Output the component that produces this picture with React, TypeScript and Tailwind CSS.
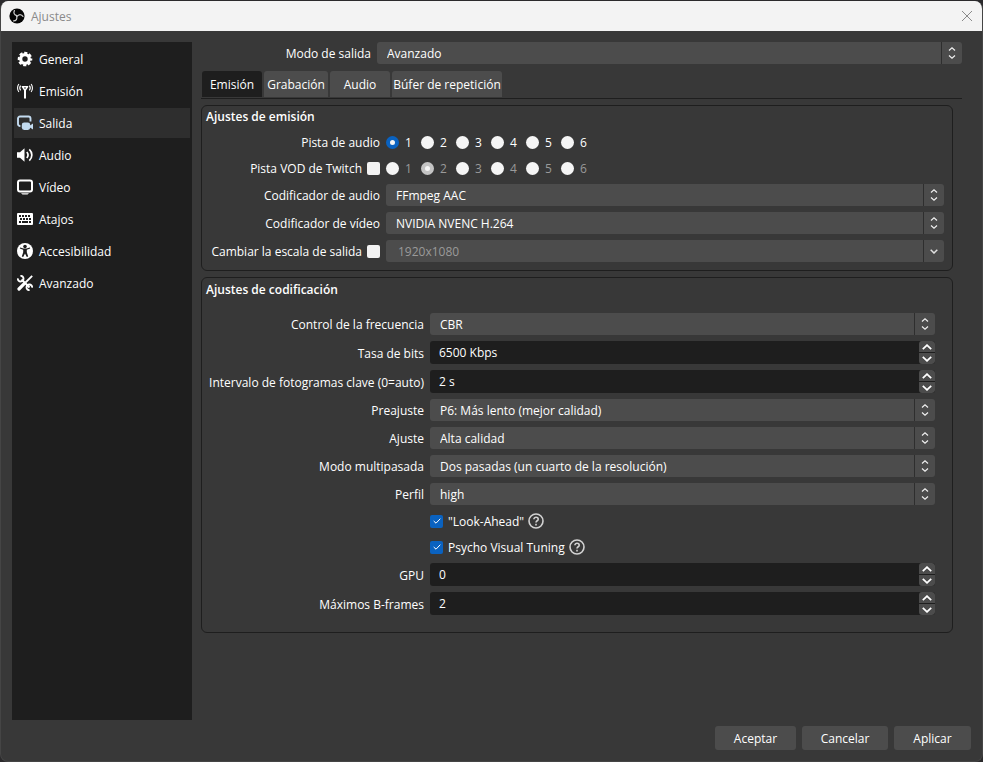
import React from 'react';

interface SelectProps {
  id: string;
  value: string;
  disabled?: boolean;
  ariaLabel?: string;
}

interface SpinProps {
  id: string;
  value: string;
}

interface RowProps {
  id: string;
  label: string;
  children: React.ReactNode;
}

interface RadioGroupProps {
  name: string;
  label: string;
  selected: number;
  disabled?: boolean;
}

const GearIcon = () => (
  <svg viewBox="0 0 16 16" className="size-4" fill="none" stroke="white">
    <circle cx="8" cy="8" r="4.3" strokeWidth="3.2" />
    <circle cx="8" cy="8" r="6.2" strokeWidth="2.2" strokeDasharray="3.1 1.77" strokeDashoffset="1.55" />
  </svg>
);

const AntennaIcon = () => (
  <svg viewBox="0 0 16 16" className="size-4" fill="none" stroke="white">
    <path d="M5.4 3.7h5.200L8 7.500z" strokeWidth="1.500" strokeLinejoin="round" />
    <path d="M8 7v8.500" strokeWidth="2" />
    <path d="M1.900 1C.1 3.200.1 6.800 1.900 9M14.100 1c1.800 2.200 1.800 5.800 0 8" strokeWidth="1.100" />
    <path d="M3.600 2.600c-1.100 1.500-1.100 3.300 0 4.800M12.400 2.600c1.100 1.500 1.100 3.300 0 4.800" strokeWidth="1.100" />
  </svg>
);

const OutputIcon = () => (
  <svg viewBox="0 0 16 16" className="size-4">
    <path d="M3.400 11H3a2 2 0 0 1-2-2V3.500a2 2 0 0 1 2-2h8.500a2 2 0 0 1 2 2v3" fill="none" stroke="#c3dbf0" strokeWidth="1.900" />
    <rect x="4.800" y="7.500" width="8.400" height="7.500" rx="2.400" fill="#c3dbf0" />
    <path d="M12.500 10.800L16 8.600v5.800l-3.500-2.200z" fill="#c3dbf0" />
  </svg>
);

const SpeakerIcon = () => (
  <svg viewBox="0 0 16 16" className="size-4">
    <path d="M0 5.200h3L7.500 1.200v13.600L3 10.800H0z" fill="white" />
    <path d="M9.800 5c1.500 1.800 1.500 4.200 0 6M12.300 2.300c3.400 3.200 3.400 8.200 0 11.400" fill="none" stroke="white" strokeWidth="1.700" />
  </svg>
);

const MonitorIcon = () => (
  <svg viewBox="0 0 16 16" className="size-4">
    <rect x="1" y="1.500" width="14" height="11" rx="2" fill="none" stroke="white" strokeWidth="2" />
    <path d="M4 14.300h8l-1.500 1.200h-5z" fill="white" />
  </svg>
);

const KeyboardIcon = () => (
  <svg viewBox="0 0 16 16" className="size-4">
    <rect y="2" width="16" height="12" rx="1" fill="white" />
    <path d="M2 5h12M3 8h11" stroke="#1e1e1e" strokeWidth="2" strokeDasharray="2 1" />
    <path d="M2 11h2M5 11h6M12 11h2" stroke="#1e1e1e" strokeWidth="2" />
  </svg>
);

const PersonIcon = () => (
  <svg viewBox="0 0 16 16" className="size-4">
    <circle cx="8" cy="8" r="8" fill="white" />
    <circle cx="8" cy="3.500" r="1.800" fill="#1e1e1e" />
    <path d="M2.800 5.600l3.400 1.100v2.600L4.800 13.600l1.400.5L8 10.500l1.800 3.600 1.400-.5-1.400-4.300V6.700l3.400-1.100-.4-1.200L9.500 5.400h-3L3.200 4.400z" fill="#1e1e1e" />
  </svg>
);

const ToolsIcon = () => (
  <svg viewBox="0 0 16 16" className="size-4" fill="none" stroke="white">
    <path d="M4.500 4.500l8 8" strokeWidth="2.200" />
    <path d="M3.400.9a2.800 2.800 0 1 1-2.500 2.500M12.600 15.100a2.800 2.800 0 1 1 2.500-2.500" strokeWidth="1.900" />
    <path d="M15.200.8L8.500 7.500" strokeWidth="1.800" />
    <path d="M6.800 9.200L2 14" strokeWidth="3.200" strokeLinecap="round" />
  </svg>
);

const ObsLogo = () => (
  <svg viewBox="0 0 16 16" className="size-4">
    <circle cx="8" cy="8" r="7.600" fill="#050505" />
    <g fill="none" stroke="#d0d0d0" strokeWidth="1.200" strokeLinecap="round">
      <path d="M8 7.600C5.200 7 4.200 4.800 5.400 2.600" />
      <path d="M8 7.600C5.200 7 4.200 4.800 5.400 2.600" transform="rotate(120 8 8)" />
      <path d="M8 7.600C5.200 7 4.200 4.800 5.400 2.600" transform="rotate(240 8 8)" />
    </g>
  </svg>
);

const HelpIcon = () => (
  <svg viewBox="0 0 16 16" className="size-4" fill="none" stroke="#d2d2d2">
    <circle cx="8" cy="8" r="7" strokeWidth="1.600" />
    <path d="M5.900 6.300c0-2.800 4.300-2.600 4.300-.1C10.200 7.800 8 7.700 8 9.600" strokeWidth="1.600" />
    <path d="M8 10.800v1.600" strokeWidth="1.600" />
  </svg>
);

const Chevron = ({ up = false }: { up?: boolean }) => (
  <svg viewBox="0 0 10 6" className="h-[6px] w-[10px]" fill="none" stroke="white" strokeWidth="1.800">
    <path d={up ? 'M.8 5.200L5 1.200l4.200 4' : 'M.8.8L5 4.800 9.200.8'} />
  </svg>
);

const sections = [
  { label: 'General', icon: <GearIcon /> },
  { label: 'Emisión', icon: <AntennaIcon /> },
  { label: 'Salida', icon: <OutputIcon /> },
  { label: 'Audio', icon: <SpeakerIcon /> },
  { label: 'Vídeo', icon: <MonitorIcon /> },
  { label: 'Atajos', icon: <KeyboardIcon /> },
  { label: 'Accesibilidad', icon: <PersonIcon /> },
  { label: 'Avanzado', icon: <ToolsIcon /> },
];

const tabs = [
  { label: 'Emisión', width: 'w-[60px]' },
  { label: 'Grabación', width: 'w-[64px]' },
  { label: 'Audio', width: 'w-[60px]' },
  { label: 'Búfer de repetición', width: 'w-[110px]' },
];

const Select: React.FC<SelectProps> = ({ id, value, disabled = false, ariaLabel }) => (
  <div className="grid min-w-0 flex-1">
    <select
      id={id}
      disabled={disabled}
      aria-label={ariaLabel}
      className={`col-start-1 row-start-1 h-[22px] w-full appearance-none rounded-[3px] bg-[#4c4c4c] pt-[2px] pr-6 leading-4 ${
        disabled ? 'pl-3 text-[#9a9a9a]' : 'pl-[10px] text-white'
      }`}
    >
      <option>{value}</option>
    </select>
    <span className="pointer-events-none col-start-1 row-start-1 flex w-[21px] items-center justify-center justify-self-end border-l border-[#2e2e2e]">
      {disabled ? (
        <svg viewBox="0 0 8 5" className="h-[5px] w-2" fill="none" stroke="#e0e0e0" strokeWidth="1.500">
          <path d="M.7.7L4 4 7.300.7" />
        </svg>
      ) : (
        <svg viewBox="0 0 8 12" className="h-3 w-2" fill="none" stroke="#f0f0f0" strokeWidth="1.200">
          <path d="M1 3.500L4 .8l3 2.700M1 8.500l3 2.700 3-2.700" />
        </svg>
      )}
    </span>
  </div>
);

const Spin: React.FC<SpinProps> = ({ id, value }) => (
  <div className="flex h-[23px] min-w-0 flex-1 overflow-hidden rounded-[3px] bg-[#1e1e1e]">
    <input id={id} type="text" defaultValue={value} className="min-w-0 flex-1 bg-transparent pl-[9px] leading-4 text-white" />
    <div className="flex w-4 flex-col gap-px">
      <button aria-label="Aumentar" className="flex flex-1 items-center justify-center rounded-t-[3px] bg-[#4c4c4c]">
        <Chevron up />
      </button>
      <button aria-label="Reducir" className="flex flex-1 items-center justify-center rounded-b-[3px] bg-[#4c4c4c]">
        <Chevron />
      </button>
    </div>
  </div>
);

const RadioGroup: React.FC<RadioGroupProps> = ({ name, label, selected, disabled = false }) => (
  <div role="radiogroup" aria-label={label} className="flex">
    {[1, 2, 3, 4, 5, 6].map((n) => (
      <label key={n} className={`flex w-[35px] items-center gap-[6px] ${disabled ? 'text-[#9a9a9a]' : ''}`}>
        <input
          type="radio"
          name={name}
          defaultChecked={n === selected}
          disabled={disabled}
          className="size-[13px] shrink-0 appearance-none rounded-full bg-[#f5f5f5] checked:border-4 checked:border-[#0a62c0] disabled:checked:border-[#c4c4c4]"
        />
        <span className="pt-px">{n}</span>
      </label>
    ))}
  </div>
);

const SmallCheckbox = ({ id }: { id: string }) => (
  <input id={id} type="checkbox" className="size-[13px] shrink-0 appearance-none rounded-[2px] bg-[#f3f3f3]" />
);

// Row of the encoder form, with the label on the left
const Row: React.FC<RowProps> = ({ id, label, children }) => (
  <div className="flex items-center gap-[6px]">
    <label htmlFor={id} className="w-[222px] shrink-0 pt-[2px] text-right">{label}</label>
    {children}
  </div>
);

const CheckRow = ({ id, label }: { id: string; label: string }) => (
  <div className="flex h-5 items-center pl-[228px]">
    <span className="grid place-items-center">
      <input
        id={id}
        type="checkbox"
        defaultChecked
        className="col-start-1 row-start-1 size-[13px] appearance-none rounded-[2px] bg-[#0a62c0]"
      />
      <svg viewBox="0 0 8 6" className="pointer-events-none col-start-1 row-start-1 h-[6px] w-2" fill="none" stroke="white">
        <path d="M.7 3l2.300 2.200L7.300.7" />
      </svg>
    </span>
    <label htmlFor={id} className="pt-[2px] pl-[5px]">{label}</label>
    <span className="pl-1"><HelpIcon /></span>
  </div>
);

export default function App() {
  return (
    <div className="min-h-screen bg-[#2b2a2c] pt-px font-['Open_Sans','Noto_Sans',sans-serif] text-[12px] leading-4 text-white">
      <div className="flex min-h-[calc(100vh-1px)] flex-col overflow-hidden rounded-lg border-x border-b border-[#454545] bg-[#383838]">
        <header className="flex h-[30px] items-center justify-between bg-[#f3f3f3] pr-[9px] pl-2 text-[#8a8a8a]">
          <div className="flex items-center gap-[6px]">
            <ObsLogo />
            <h1 className="pt-px">Ajustes</h1>
          </div>
          <button aria-label="Cerrar">
            <svg viewBox="0 0 12 12" className="size-3" fill="none" stroke="#8a8a8a">
              <path d="M1 1l10 10M11 1L1 11" />
            </svg>
          </button>
        </header>

        <div className="flex flex-1 gap-[9px] pt-[11px] pr-5 pl-[11px]">
          <nav className="flex w-[180px] shrink-0 flex-col gap-[2px] bg-[#1e1e1e] p-[2px]">
            {sections.map((s) => (
              <button
                key={s.label}
                className={`flex h-[30px] items-center gap-[6px] pl-[3px] text-left ${s.label === 'Salida' ? 'bg-[#2e2e2e]' : ''}`}
              >
                {s.icon}
                <span className="pt-[2px]">{s.label}</span>
              </button>
            ))}
          </nav>

          <main className="min-w-0 flex-1">
            <div className="flex items-center gap-[6px]">
              <label htmlFor="mode" className="w-[170px] shrink-0 pt-[2px] text-right">Modo de salida</label>
              <Select id="mode" value="Avanzado" />
            </div>

            <div role="tablist" className="mt-[7px] flex gap-[2px] border-b border-[#1e1e1e] pb-px pl-px">
              {tabs.map((t, i) => (
                <button
                  key={t.label}
                  role="tab"
                  aria-selected={i === 0}
                  className={`h-[26px] rounded-t-[3px] pt-[2px] text-center whitespace-nowrap ${t.width} ${i === 0 ? 'bg-[#1e1e1e]' : 'bg-[#4c4c4c]'}`}
                >
                  {t.label}
                </button>
              ))}
            </div>

            <section className="mt-[6px] mr-[9px] flex flex-col gap-[6px] rounded-md border border-[#1e1e1e] pt-[2px] pr-2 pb-2">
              <h2 className="pl-1 leading-[18px] font-semibold">Ajustes de emisión</h2>
              <div className="flex h-5 items-center gap-[6px]">
                <span className="w-[178px] shrink-0 pt-px text-right">Pista de audio</span>
                <RadioGroup name="track" label="Pista de audio" selected={1} />
              </div>
              <div className="flex h-5 items-center gap-[6px]">
                <div className="flex w-[178px] shrink-0 items-center justify-end gap-[5px]">
                  <label htmlFor="vod" className="pt-px">Pista VOD de Twitch</label>
                  <SmallCheckbox id="vod" />
                </div>
                <RadioGroup name="vodTrack" label="Pista VOD de Twitch" selected={2} disabled />
              </div>
              <div className="flex items-center gap-[6px]">
                <label htmlFor="audioEncoder" className="w-[178px] shrink-0 pt-[2px] text-right">Codificador de audio</label>
                <Select id="audioEncoder" value="FFmpeg AAC" />
              </div>
              <div className="flex items-center gap-[6px]">
                <label htmlFor="videoEncoder" className="w-[178px] shrink-0 pt-[2px] text-right">Codificador de vídeo</label>
                <Select id="videoEncoder" value="NVIDIA NVENC H.264" />
              </div>
              <div className="flex items-center gap-[6px]">
                <div className="flex w-[178px] shrink-0 items-center justify-end gap-[5px]">
                  <label htmlFor="rescale" className="pt-[2px] whitespace-nowrap">Cambiar la escala de salida</label>
                  <SmallCheckbox id="rescale" />
                </div>
                <Select id="resolution" value="1920x1080" ariaLabel="Escala de salida" disabled />
              </div>
            </section>

            <section className="mt-[6px] mr-[9px] rounded-md border border-[#1e1e1e] pt-[3px] pr-[17px] pb-[17px]">
              <h2 className="pl-1 leading-[18px] font-semibold">Ajustes de codificación</h2>
              <div className="mt-[14px] flex flex-col gap-[6px]">
                <Row id="rate" label="Control de la frecuencia"><Select id="rate" value="CBR" /></Row>
                <Row id="bitrate" label="Tasa de bits"><Spin id="bitrate" value="6500 Kbps" /></Row>
                <Row id="keyint" label="Intervalo de fotogramas clave (0=auto)"><Spin id="keyint" value="2 s" /></Row>
                <Row id="preset" label="Preajuste"><Select id="preset" value="P6: Más lento (mejor calidad)" /></Row>
                <Row id="tuning" label="Ajuste"><Select id="tuning" value="Alta calidad" /></Row>
                <Row id="multipass" label="Modo multipasada">
                  <Select id="multipass" value="Dos pasadas (un cuarto de la resolución)" />
                </Row>
                <Row id="profile" label="Perfil"><Select id="profile" value="high" /></Row>
                <CheckRow id="lookahead" label={'"Look-Ahead"'} />
                <CheckRow id="psycho" label="Psycho Visual Tuning" />
                <Row id="gpu" label="GPU"><Spin id="gpu" value="0" /></Row>
                <Row id="bframes" label="Máximos B-frames"><Spin id="bframes" value="2" /></Row>
              </div>
            </section>
          </main>
        </div>

        <footer className="flex justify-end gap-[6px] pt-[6px] pr-[11px] pb-[11px]">
          <button className="h-6 w-[81px] rounded-[3px] bg-[#4c4c4c] pt-[2px]">Aceptar</button>
          <button className="h-6 w-[86px] rounded-[3px] bg-[#4c4c4c] pt-[2px]">Cancelar</button>
          <button className="h-6 w-[77px] rounded-[3px] bg-[#4c4c4c] pt-[2px]">Aplicar</button>
        </footer>
      </div>
    </div>
  );
}
